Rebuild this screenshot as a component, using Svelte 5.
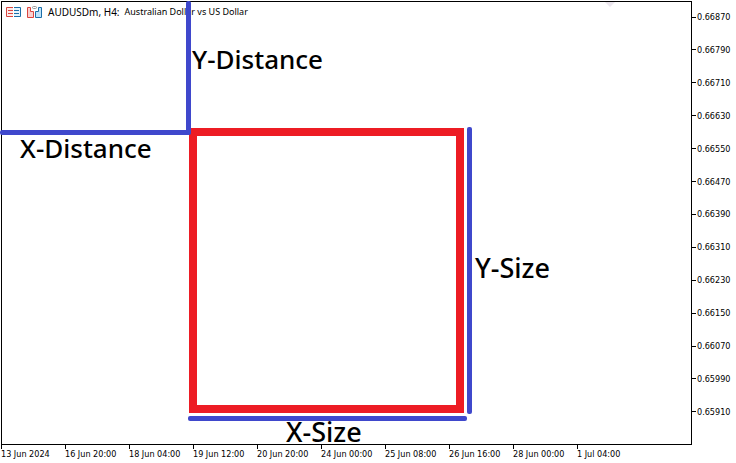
<script>
  const prices = ['0.66870', '0.66790', '0.66710', '0.66630', '0.66550', '0.66470', '0.66390', '0.66310', '0.66230', '0.66150', '0.66070', '0.65990', '0.65910'];
  const times = ['13 Jun 2024', '16 Jun 20:00', '18 Jun 04:00', '19 Jun 12:00', '20 Jun 20:00', '24 Jun 00:00', '25 Jun 08:00', '26 Jun 16:00', '28 Jun 00:00', '1 Jul 04:00'];
</script>

<main class="chart">
  <div class="upper">
    <section class="plot">
      <header class="title">
        <svg class="icon" width="16" height="14" viewBox="0 0 16 14" fill="none" aria-hidden="true">
          <path d="M7 2.500H.5V11.500H7" fill="#fdeae9" stroke="#d9453f" />
          <path d="M2 5.500H7M2 8.500H7" stroke="#d9453f" />
          <path d="M8 2.500H14.500V11.500H8" fill="#e6f4fc" stroke="#1c6ea8" />
          <path d="M8 5.500H13M8 8.500H13" stroke="#1c6ea8" />
        </svg>
        <svg class="icon" width="16" height="14" viewBox="0 0 16 14" fill="none" aria-hidden="true">
          <path d="M.5 2.500H3.500V6.500H6.500V12.500H.5Z" fill="#fbd0cf" stroke="#d9453f" />
          <path d="M14.500 2.500H11.500V6.500H8.500V12.500H14.500Z" fill="#bfe3fa" stroke="#1c6ea8" />
          <rect x="5.500" y="1.500" width="4" height="2" rx="1" fill="#fff" stroke="#999" />
        </svg>
        <h1>AUDUSDm, H4:</h1>
        <span>Australian Dollar vs US Dollar</span>
      </header>
      <i class="marker"></i>
    </section>
    <ol class="prices">
      {#each prices as price}
        <li>{price}</li>
      {/each}
    </ol>
  </div>
  <ol class="times">
    {#each times as time}
      <li>{time}</li>
    {/each}
  </ol>

  <div class="object"></div>
  <i class="line x-distance"></i>
  <i class="line y-distance"></i>
  <i class="line x-size"></i>
  <i class="line y-size"></i>
  <span class="note note-yd">Y-Distance</span>
  <span class="note note-xd">X-Distance</span>
  <span class="note size note-ys">Y-Size</span>
  <span class="note size note-xs">X-Size</span>
</main>

<style>
  :global(body) {
    margin: 0;
    background: #fff;
  }

  .chart {
    position: relative;
    box-sizing: border-box;
    min-height: 100vh;
    padding: 1px 0 0 1px;
    display: flex;
    flex-direction: column;
    overflow: hidden;
    color: #000;
    font: 9px/12px "DejaVu Sans Condensed", "DejaVu Sans", sans-serif;
  }

  .upper {
    flex: 1;
    display: flex;
  }

  .plot {
    flex: 1;
    position: relative;
    border: 1px solid #000;
  }

  .title {
    display: flex;
    align-items: center;
    padding: 3px 4px;
    font-family: "Noto Sans", "Open Sans", sans-serif;
  }

  .title h1 {
    margin: 0 5px 0 0;
    font: inherit;
    font-size: 10px;
  }

  .icon {
    flex: none;
    margin-right: 5px;
  }

  .marker {
    position: absolute;
    top: 0;
    right: 76px;
    border: 5px solid transparent;
    border-top-color: #ebe6ee;
    border-bottom: 0;
  }

  ol {
    margin: 0;
    padding: 0;
    list-style: none;
  }

  .prices {
    width: 44px;
    padding: 10px 0 27px;
    display: flex;
    flex-direction: column;
    justify-content: space-between;
  }

  .prices li {
    display: flex;
    align-items: center;
    gap: 1px;
  }

  .prices li::before {
    content: "";
    width: 4px;
    height: 1px;
    background: #000;
  }

  .times {
    display: flex;
    height: 18px;
    line-height: 10px;
  }

  .times li {
    flex: none;
    width: 64px;
    white-space: nowrap;
  }

  .times li::before {
    content: "";
    display: block;
    width: 1px;
    height: 4px;
    background: #000;
  }

  .object {
    position: absolute;
    left: 189px;
    top: 128px;
    box-sizing: border-box;
    width: 275px;
    height: 285px;
    border: 8px solid #ed1c24;
  }

  .line {
    position: absolute;
    background: #3f48cc;
    border-radius: 2px;
  }

  .x-distance {
    left: 0;
    top: 130px;
    width: 191px;
    height: 5px;
  }

  .y-distance {
    left: 186px;
    top: 1px;
    width: 5px;
    height: 133px;
  }

  .x-size {
    left: 188px;
    top: 416px;
    width: 279px;
    height: 5px;
  }

  .y-size {
    left: 467px;
    top: 127px;
    width: 5px;
    height: 287px;
  }

  .note {
    position: absolute;
    font: 500 26px/32px "Noto Sans", "Open Sans", sans-serif;
    white-space: nowrap;
  }

  .size {
    font-size: 27px;
  }

  .note-yd {
    left: 192px;
    top: 43px;
  }

  .note-xd {
    left: 20px;
    top: 132px;
  }

  .note-ys {
    left: 475px;
    top: 252px;
  }

  .note-xs {
    left: 286px;
    top: 416px;
  }
</style>
